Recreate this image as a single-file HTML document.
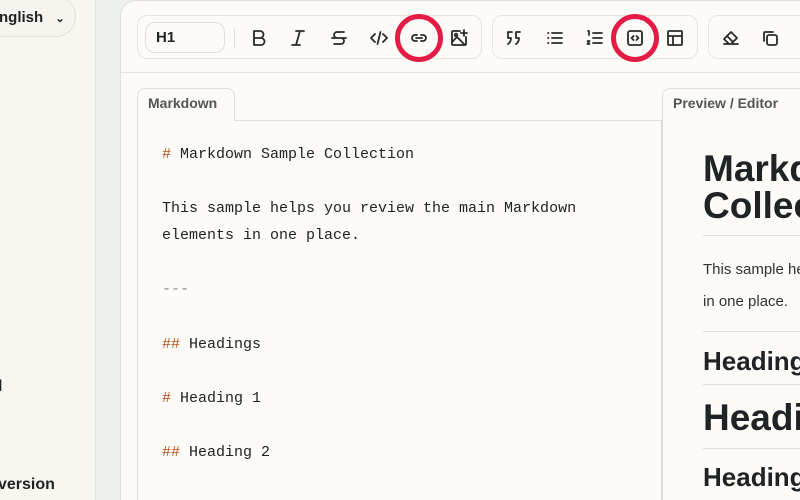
<!DOCTYPE html>
<html><head><meta charset="utf-8"><style>
*{box-sizing:border-box;margin:0;padding:0}
html{overflow:hidden;width:800px;height:500px}
body{width:800px;height:500px;overflow:hidden;background:#eef0ec;font-family:"Liberation Sans",sans-serif;position:relative;color:#222}
.side{position:absolute;left:0;top:0;width:96px;height:500px;background:#f8f6f0;border-right:1px solid #e2e2dc}
.pill{position:absolute;left:-30px;top:-4px;width:106px;height:41px;border:1px solid #e2e0d8;border-radius:20px;background:#f6f4ee;font-weight:bold;font-size:15px;line-height:41px;padding-left:28px;color:#222}
.main{position:absolute;left:120px;top:0;width:680px;height:500px;background:#fcfbf7;border-left:1px solid #e2e0d8;border-top:1px solid #e2e0d8;border-top-left-radius:16px}
.tb{position:absolute;top:71px;left:0;right:0;height:1px;background:#e4e2da}
.grp{position:absolute;top:15px;height:44px;border:1px solid #e6e4dc;border-radius:10px;background:#fcfbf7}
.sel{position:absolute;left:145px;top:22px;width:80px;height:31px;border:1px solid #e2e0d8;border-radius:10px;font-weight:bold;font-size:15px;line-height:29px;padding-left:10px;color:#222}
.ic{position:absolute;top:28px;width:20px;height:20px}
.ic svg{width:20px;height:20px;fill:none;stroke:#2a2a2a;stroke-width:1.8;stroke-linecap:round;stroke-linejoin:round}
.tab{position:absolute;top:88px;height:33px;border:1px solid #e2e0d8;border-bottom:none;border-radius:8px 8px 0 0;font-weight:bold;font-size:14px;color:#555;line-height:28px;padding-left:10px;background:#fcfbf7;overflow:hidden;white-space:nowrap}
.ed{position:absolute;left:137px;top:120px;width:526px;height:380px;border-left:1px solid #e2e0d8;border-top:1px solid #e2e0d8;border-right:2px solid #dcdbd3}
.code{position:absolute;left:162px;top:141px;font-family:"Liberation Mono",monospace;font-size:15px;line-height:27.1px;color:#222;white-space:pre}
.h{color:#b4521d}
.pv{position:absolute;left:703px;top:0;width:97px;height:500px;overflow:hidden;color:#1f2326}
.pv div{white-space:nowrap}
.circ{position:absolute;width:48px;height:48px;border:5px solid #e31b45;border-radius:50%}
</style></head><body>
<div class="side">
<div class="pill">nglish <span style="font-size:11px;margin-left:8px">&#8964;</span></div>
<div style="position:absolute;left:-2px;top:378px;font-size:16px;font-weight:bold">l</div>
<div style="position:absolute;left:-2px;top:476px;font-size:16px;font-weight:bold">version</div>
</div>
<div class="main"><div class="tb"></div></div>
<div class="grp" style="left:137px;width:345px"></div>
<div class="grp" style="left:492px;width:206px"></div>
<div class="grp" style="left:708px;width:100px;border-right:none;border-radius:10px 0 0 10px"></div>
<div class="sel">H1</div>
<div style="position:absolute;left:234px;top:28px;width:1px;height:20px;background:#e2e0d8"></div>
<div class="ic" style="left:249px"><svg viewBox="0 0 20 20"><path d="M5 3h6a3.5 3.5 0 0 1 0 7H5zM5 10h7a3.5 3.5 0 0 1 0 7H5z"/></svg></div>
<div class="ic" style="left:288px"><svg viewBox="0 0 20 20"><path d="M8 3h8M4 17h8M12 3L8 17"/></svg></div>
<div class="ic" style="left:329px"><svg viewBox="0 0 20 20"><path d="M15 4H8a3 3 0 0 0 0 6h4a3 3 0 0 1 0 6H5M3 10h14"/></svg></div>
<div class="ic" style="left:369px"><svg viewBox="0 0 20 20"><path d="M6 6l-4 4 4 4M14 6l4 4-4 4M11.5 4l-3 12"/></svg></div>
<div class="ic" style="left:409px"><svg viewBox="0 0 20 20"><path d="M8 7H6a3 3 0 0 0 0 6h2M12 7h2a3 3 0 0 1 0 6h-2M7 10h6"/></svg></div>
<div class="ic" style="left:449px"><svg viewBox="0 0 20 20"><path d="M11 3H4a1 1 0 0 0-1 1v12a1 1 0 0 0 1 1h12a1 1 0 0 0 1-1V9M3 14l5-5 8 8M15 2v6M12 5h6"/><circle cx="7" cy="7" r="1.3"/></svg></div>
<div class="ic" style="left:504px"><svg viewBox="0 0 20 20"><path d="M8 4H4v6h3q0 4-3 6M16 4h-4v6h3q0 4-3 6"/></svg></div>
<div class="ic" style="left:545px"><svg viewBox="0 0 20 20"><path d="M7 5h10M7 10h10M7 15h10M3 5h.5M3 10h.5M3 15h.5"/></svg></div>
<div class="ic" style="left:585px"><svg viewBox="0 0 20 20"><path d="M8 5h9M8 10h9M8 15h9M3 3h1v4M2.5 13h2l-2 3h2"/></svg></div>
<div class="ic" style="left:625px"><svg viewBox="0 0 20 20"><rect x="3" y="3" width="14" height="14" rx="2"/><path d="M8.5 8l-2 2 2 2M11.5 8l2 2-2 2"/></svg></div>
<div class="ic" style="left:665px"><svg viewBox="0 0 20 20"><rect x="3" y="3" width="14" height="14" rx="1"/><path d="M3 8h14M8 8v9"/></svg></div>
<div class="ic" style="left:721px"><svg viewBox="0 0 20 20"><path d="M8 16l-5-5 7-7 6 6-6 6zM3 16h14M6 8l6 6"/></svg></div>
<div class="ic" style="left:760px"><svg viewBox="0 0 20 20"><rect x="7" y="7" width="10" height="10" rx="2"/><path d="M13 4H5a1 1 0 0 0-1 1v8"/></svg></div>
<div class="circ" style="left:395px;top:14px"></div>
<div class="circ" style="left:611px;top:14px"></div>
<div class="ed"></div>
<div class="tab" style="left:137px;width:98px">Markdown</div>
<div class="tab" style="left:662px;width:138px;border-right:none;border-radius:8px 0 0 0">Preview / Editor</div>
<div class="code"><span class="h">#</span> Markdown Sample Collection

This sample helps you review the main Markdown
elements in one place.

<span style="color:#888">---</span>

<span class="h">##</span> Headings

<span class="h">#</span> Heading 1

<span class="h">##</span> Heading 2</div>
<div class="pv">
<div style="position:absolute;top:150px;font-size:37px;font-weight:bold;line-height:37px">Markdown Sample<br>Collection</div>
<div style="position:absolute;top:235px;width:200px;height:1px;background:#dddcd5"></div>
<div style="position:absolute;top:254px;font-size:15px;line-height:32px;color:#333">This sample helps you review<br>in one place.</div>
<div style="position:absolute;top:331px;width:200px;height:1px;background:#dddcd5"></div>
<div style="position:absolute;top:346px;font-size:26px;font-weight:bold">Headings</div>
<div style="position:absolute;top:384px;width:200px;height:1px;background:#dddcd5"></div>
<div style="position:absolute;top:397px;font-size:37px;font-weight:bold">Heading 1</div>
<div style="position:absolute;top:448px;width:200px;height:1px;background:#dddcd5"></div>
<div style="position:absolute;top:462px;font-size:26px;font-weight:bold">Heading 2</div>
</div>
</body></html>
